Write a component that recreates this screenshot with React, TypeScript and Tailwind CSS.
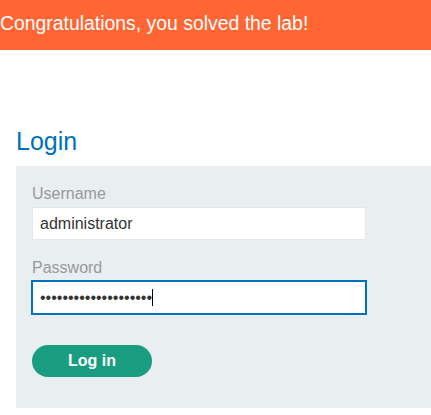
import React from "react";

export default function App() {
  const font = { fontFamily: '"Liberation Sans", Arial, sans-serif' };
  return (
    <div className="w-[431px] h-[415px] bg-white overflow-hidden" style={font}>
      <div className="h-[50px] bg-[#ff6633] text-white text-[19.4px] leading-[47px] whitespace-nowrap">
        Congratulations, you solved the lab!
      </div>
      <h1 className="mt-[76px] ml-4 text-[25px] leading-[30px] text-[#0071bc] font-normal">Login</h1>
      <div className="mt-[10px] ml-4 bg-[#e9eef1] pl-4 pt-4 pb-[31px]">
        <div className="text-[16px] leading-6 text-[#999999]">Username</div>
        <div className="mt-px w-[334px] h-[33px] bg-white border border-[#e6e6e6] pl-[7px] flex items-center text-[16px] text-[#333333]">
          administrator
        </div>
        <div className="mt-4 text-[16px] leading-6 text-[#999999]">Password</div>
        <div className="mt-px w-[334px] h-[33px] bg-white border border-[#0071bc] ring-1 ring-[#0071bc] pl-[7px] flex items-center text-[16px] text-[#333333]">
          <span>••••••••••••••••••••</span>
          <span className="w-px h-[17px] bg-black" />
        </div>
        <button className="mt-[31px] w-[120px] h-8 rounded-full bg-[#189d80] text-white font-bold text-[16px] flex items-center justify-center">
          Log in
        </button>
      </div>
    </div>
  );
}
